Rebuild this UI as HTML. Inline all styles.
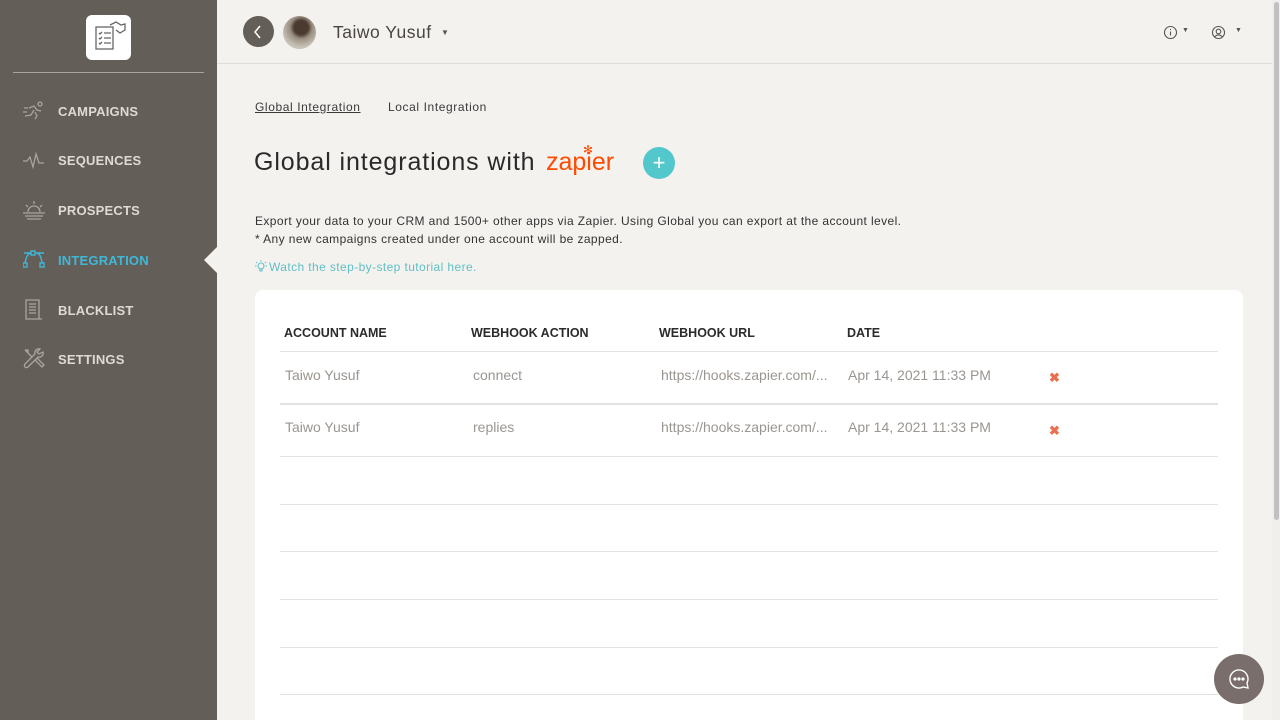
<!DOCTYPE html>
<html style="width:1280px;height:720px;overflow:hidden"><head><style>
*{margin:0;padding:0;box-sizing:border-box}
body{width:1280px;height:720px;overflow:hidden;background:#f4f2ef;font-family:"Liberation Sans",sans-serif;position:relative}
.side{position:absolute;left:0;top:0;width:217px;height:720px;background:#645e58}
.logo{position:absolute;left:86px;top:15px;width:45px;height:45px;background:#fff;border-radius:6px}
.sep{position:absolute;left:13px;top:72px;width:191px;height:1px;background:#a9a49f}
.nav{position:absolute;left:58px;font-size:13px;font-weight:bold;color:#dedad6;letter-spacing:.2px}
.ic{position:absolute;left:23px}
.arrow{position:absolute;left:204px;top:247px;width:0;height:0;border-top:13px solid transparent;border-bottom:13px solid transparent;border-right:13px solid #f4f2ef}
.top{position:absolute;left:217px;top:0;width:1055px;height:64px;border-bottom:1px solid #e0ddd9}
.scroll{position:absolute;left:1272px;top:0;width:8px;height:720px;background:#f0efed}
.scroll div{position:absolute;left:2px;top:2px;width:5px;height:518px;background:#c1c1c1;border-radius:3px}
.t{position:absolute;white-space:nowrap}
.card{position:absolute;left:255px;top:290px;width:988px;height:430px;background:#fff;border-radius:8px 8px 0 0}
.hl{position:absolute;left:280px;width:938px;height:1px;background:#e4e2e0}
.th{position:absolute;top:326px;font-size:12.5px;font-weight:bold;color:#2b2b2b}
.td{position:absolute;font-size:14px;color:#9a9590}
.x{position:absolute;left:1049px;color:#e8704f;font-size:13px;font-weight:bold}
</style></head><body>
<div class="side">
 <div class="logo"><svg width="45" height="45" viewBox="0 0 45 45" fill="none" stroke="#666" stroke-width="1.3"><rect x="10" y="12" width="17" height="22"/><path d="M13 18l1 1 2-2M18 18h7M13 23l1 1 2-2M18 23h7M13 28l1 1 2-2M18 28h7M24 10l6-3 5 3 4-1v6l-5 3-4-3"/></svg></div>
 <div class="sep"></div>
 <svg class="ic" style="top:100px" width="22" height="20" fill="none" stroke="#a9a49f" stroke-width="1.3"><circle cx="17" cy="4" r="2"/><path d="M6 8l5-2 3 4 4 1M11 10l-3 5-6 1M12 12l2 4-2 3M1 8h4M0 12h4"/></svg>
 <div class="nav" style="top:104px">CAMPAIGNS</div>
 <svg class="ic" style="top:150px" width="22" height="20" fill="none" stroke="#a9a49f" stroke-width="1.3"><path d="M0 11h4l3-4 3 10 3-13 3 9h5"/></svg>
 <div class="nav" style="top:153px">SEQUENCES</div>
 <svg class="ic" style="top:200px" width="22" height="20" fill="none" stroke="#a9a49f" stroke-width="1.3"><path d="M5 12a6 6 0 0 1 12 0M0 13h22M2 16h18M4 19h14M11 1v3M3 5l2 2M19 5l-2 2"/></svg>
 <div class="nav" style="top:203px">PROSPECTS</div>
 <svg class="ic" style="top:250px" width="22" height="20" fill="none" stroke="#3fb8d8" stroke-width="1.4"><rect x="0" y="13" width="4" height="4"/><rect x="17" y="13" width="4" height="4"/><rect x="8" y="1" width="4" height="4"/><path d="M2 13Q4 3 8 3M13 3q5 0 6 10M1 3h7M13 3h8"/></svg>
 <div class="nav" style="top:253px;color:#3fb8d8">INTEGRATION</div>
 <svg class="ic" style="top:299px" width="22" height="22" fill="none" stroke="#a9a49f" stroke-width="1.3"><path d="M3 1h13v19H3zM6 5h7M6 8h7M6 11h7M6 14h7M3 20h16"/></svg>
 <div class="nav" style="top:303px">BLACKLIST</div>
 <svg class="ic" style="top:348px" width="22" height="22" fill="none" stroke="#a9a49f" stroke-width="1.3"><path d="M2 2l7 7M2 2l3 0 0 3M12 12l7 7 2-2-7-7M20 4a4 4 0 0 1-5 5L5 19a2 2 0 0 1-3-3L12 6a4 4 0 0 1 5-5l-3 3 2 2z"/></svg>
 <div class="nav" style="top:352px">SETTINGS</div>
 <div class="arrow"></div>
</div>
<div class="top"></div>
<div style="position:absolute;left:243px;top:16px;width:31px;height:31px;border-radius:50%;background:#645e58"></div>
<svg style="position:absolute;left:252px;top:24px" width="12" height="16" fill="none" stroke="#fff" stroke-width="1.5"><path d="M8 2L3 8l5 6"/></svg>
<div style="position:absolute;left:283px;top:16px;width:33px;height:33px;border-radius:50%;background:radial-gradient(circle at 55% 35%,#4a3a30 0 25%,#9a8f80 40%,#c8c2b8 70%)"></div>
<div class="t" style="left:333px;top:22px;font-size:17.5px;color:#4a4540;letter-spacing:.5px">Taiwo Yusuf</div>
<div class="t" style="left:441px;top:28px;font-size:8px;color:#555">▼</div>
<svg style="position:absolute;left:1163px;top:25px" width="15" height="15" fill="none" stroke="#555" stroke-width="1.1"><circle cx="7.5" cy="7.5" r="6"/><path d="M7.5 6.5v4M7.5 4v1"/></svg>
<div class="t" style="left:1182px;top:27px;font-size:7px;color:#555">▼</div>
<svg style="position:absolute;left:1211px;top:25px" width="15" height="15" fill="none" stroke="#555" stroke-width="1.1"><circle cx="7.5" cy="7.5" r="6"/><circle cx="7.5" cy="6.5" r="2.3"/><path d="M3.5 12q4-4 8 0"/></svg>
<div class="t" style="left:1235px;top:27px;font-size:7px;color:#555">▼</div>
<div class="t" style="left:255px;top:100px;font-size:12px;color:#3a3a3a;text-decoration:underline;letter-spacing:.6px">Global Integration</div>
<div class="t" style="left:388px;top:100px;font-size:12px;color:#3a3a3a;letter-spacing:.6px">Local Integration</div>
<div class="t" style="left:254px;top:148px;font-size:25px;color:#2a2a2a;letter-spacing:.9px">Global integrations with</div>
<div class="t" style="left:546px;top:148px;font-size:25px;color:#ff4a00">zapier</div>
<div class="t" style="left:583px;top:143px;font-size:12px;color:#ff4a00">✻</div>
<div style="position:absolute;left:643px;top:147px;width:32px;height:32px;border-radius:50%;background:#52c7cc;color:#fff;font-size:22px;text-align:center;line-height:31px">+</div>
<div class="t" style="left:255px;top:212px;font-size:12px;color:#333;line-height:18px;letter-spacing:.4px">Export your data to your CRM and 1500+ other apps via Zapier. Using Global you can export at the account level.<br>* Any new campaigns created under one account will be zapped.</div>
<svg style="position:absolute;left:255px;top:260px" width="12" height="12" fill="none" stroke="#5fc0c6" stroke-width="1"><circle cx="6" cy="6" r="3"/><path d="M5 9v2h2V9M6 0v1.5M1 2l1 1M11 2l-1 1M0 6h1.5M12 6h-1.5"/></svg>
<div class="t" style="left:269px;top:260px;font-size:12px;color:#5fc0c6;letter-spacing:.4px">Watch the step-by-step tutorial here.</div>
<div class="card"></div>
<div class="th" style="left:284px">ACCOUNT NAME</div>
<div class="th" style="left:471px">WEBHOOK ACTION</div>
<div class="th" style="left:659px">WEBHOOK URL</div>
<div class="th" style="left:847px">DATE</div>
<div class="hl" style="top:351px"></div>
<div class="td" style="left:285px;top:367px">Taiwo Yusuf</div><div class="td" style="left:473px;top:367px">connect</div><div class="td" style="left:661px;top:367px">https://hooks.zapier.com/...</div><div class="td" style="left:848px;top:367px">Apr 14, 2021 11:33 PM</div><div class="x" style="top:370px">✖</div>
<div class="hl" style="top:403px;height:2px"></div>
<div class="td" style="left:285px;top:419px">Taiwo Yusuf</div><div class="td" style="left:473px;top:419px">replies</div><div class="td" style="left:661px;top:419px">https://hooks.zapier.com/...</div><div class="td" style="left:848px;top:419px">Apr 14, 2021 11:33 PM</div><div class="x" style="top:423px">✖</div>
<div class="hl" style="top:456px"></div>
<div class="hl" style="top:504px"></div>
<div class="hl" style="top:551px"></div>
<div class="hl" style="top:599px"></div>
<div class="hl" style="top:647px"></div>
<div class="hl" style="top:694px"></div>
<div style="position:absolute;left:1214px;top:654px;width:50px;height:50px;border-radius:50%;background:#7a6e6c"></div>
<svg style="position:absolute;left:1227px;top:667px" width="24" height="24" fill="none" stroke="#fff" stroke-width="1.4"><path d="M20 16A9 9 0 1 0 16 20L21 21Z"/><circle cx="8" cy="12" r=".9" fill="#fff"/><circle cx="12" cy="12" r=".9" fill="#fff"/><circle cx="16" cy="12" r=".9" fill="#fff"/></svg>
<div class="scroll"><div></div></div>
</body></html>
